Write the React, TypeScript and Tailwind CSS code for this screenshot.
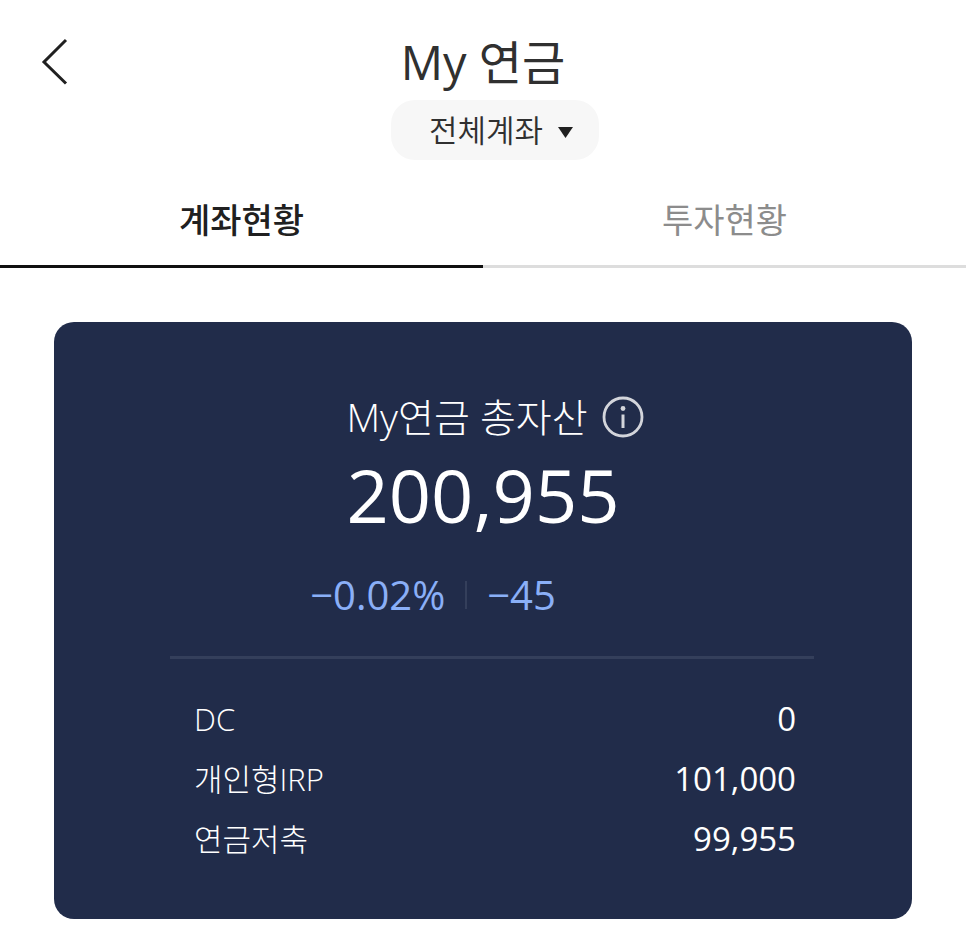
import { useState } from 'react';

// Accounts that make up the total
const accounts = [
  { name: 'DC', amount: 0 },
  { name: '개인형IRP', amount: 101000 },
  { name: '연금저축', amount: 99955 },
];

const tabs = ['계좌현황', '투자현황'];

const InfoIcon = () => (
  <svg className="h-[42px] w-[42px]" viewBox="0 0 42 42" fill="none" stroke="currentColor" aria-hidden="true">
    <circle cx="21" cy="21" r="19" strokeWidth="2.8" />
    <path d="M21 18.5v13.5" strokeWidth="3" />
    <circle cx="21" cy="12.5" r="2.4" fill="currentColor" stroke="none" />
  </svg>
);

const App = () => {
  const [activeTab, setActiveTab] = useState('계좌현황');
  const total = accounts.reduce((sum, account) => sum + account.amount, 0);

  return (
    <main className="min-h-screen bg-white pb-4 font-['Open_Sans','Noto_Sans_CJK_KR',sans-serif] text-[#303030]">
      <header className="grid grid-cols-[80px_1fr_80px] items-center pt-8">
        <button type="button" aria-label="뒤로" className="flex justify-center pl-8 text-[#202020]">
          <svg className="h-12 w-8" viewBox="0 0 32 48" fill="none" stroke="currentColor" strokeWidth="3" aria-hidden="true">
            <path d="M26 2L4 24l22 21.5" />
          </svg>
        </button>
        <h1 className="text-center text-[47px] leading-[60px]">My 연금</h1>
      </header>

      <div className="mt-2 flex justify-center pl-6">
        <div className="relative flex h-[60px] w-[208px] items-center rounded-3xl bg-[#f7f7f7]">
          <select aria-label="계좌 선택" className="h-full w-full appearance-none bg-transparent pl-[38px] text-[31px] leading-10 font-[350]">
            <option>전체계좌</option>
          </select>
          <svg className="pointer-events-none absolute top-[27px] right-[26px] h-[11px] w-[15px]" viewBox="0 0 15 11" fill="#202020" aria-hidden="true">
            <path d="M0 0h15L7.5 11z" />
          </svg>
        </div>
      </div>

      <div role="tablist" className="mt-2 grid grid-cols-2">
        {tabs.map((tab) => (
          <button
            key={tab}
            type="button"
            role="tab"
            aria-selected={activeTab === tab}
            onClick={() => setActiveTab(tab)}
            className={`h-[100px] border-b-3 pt-2 text-[34px] ${
              activeTab === tab ? 'border-[#101010] font-medium text-[#202020]' : 'border-[#dddddd] text-[#8c8c8c]'
            }`}
          >
            {tab}
          </button>
        ))}
      </div>

      <section className="mx-[54px] mt-[54px] rounded-[20px] bg-[#212c4a] pt-[69px] pb-[50px] text-white">
        <div className="flex items-center justify-center gap-[14px] pl-6">
          <h2 className="text-[39px] leading-[52px] font-light">My연금 총자산</h2>
          <button type="button" aria-label="총자산 안내" className="text-[#d3d5db]">
            <InfoIcon />
          </button>
        </div>
        <p className="text-center text-[74px] leading-[104px]">{total.toLocaleString('en-US')}</p>
        <div className="mt-5 flex items-center justify-center gap-5 pr-[100px] text-[40px] leading-[56px] text-[#8aaff7]">
          <span>−0.02%</span>
          <span className="h-7 w-[2px] bg-[#343f5b]"></span>
          <span>−45</span>
        </div>
        <div className="mt-[33px] mr-[98px] ml-[116px] border-t-3 border-[#343f5b] pt-[30px]">
          <table className="w-full leading-[60px]">
            <tbody>
              {accounts.map((account) => (
                <tr key={account.name}>
                  <th scope="row" className="p-0 pl-6 text-left text-[31px] font-light">{account.name}</th>
                  <td className="p-0 pr-[18px] text-right text-[33px]">{account.amount.toLocaleString('en-US')}</td>
                </tr>
              ))}
            </tbody>
          </table>
        </div>
      </section>
    </main>
  );
};

export default App;
